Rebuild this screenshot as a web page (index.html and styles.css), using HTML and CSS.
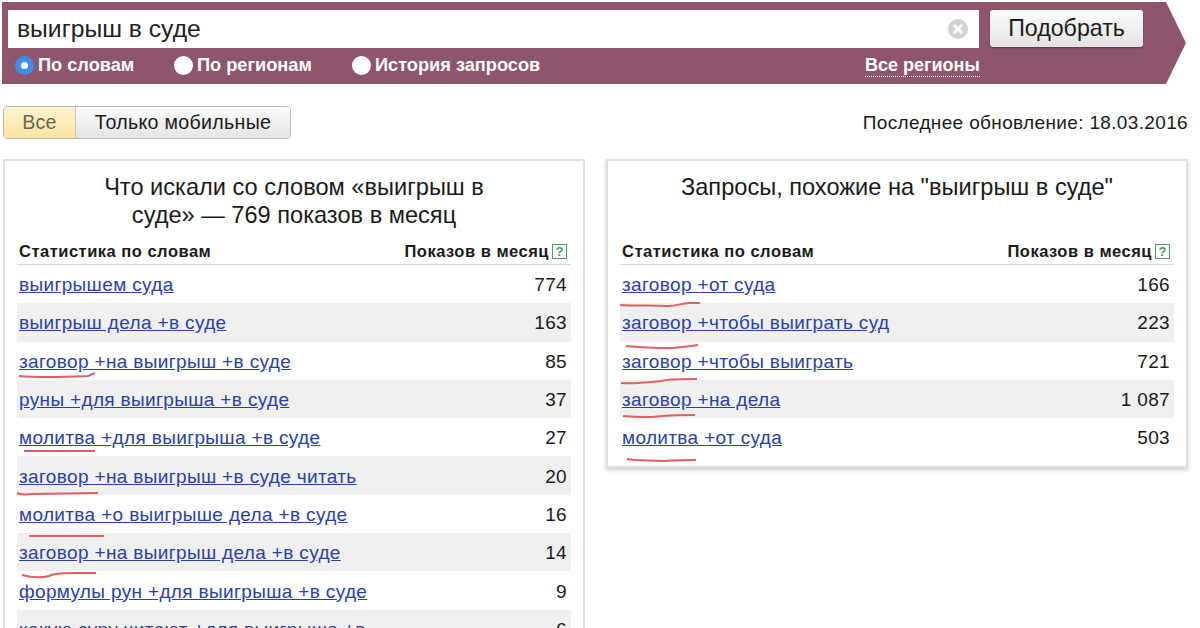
FILE: index.html
```html
<!DOCTYPE html>
<html lang="ru">
<head>
    <meta charset="UTF-8">
    <title>Подбор слов</title>
    <link rel="stylesheet" href="styles.css">
</head>
<body>
    <div class="search-bar">
        <div class="search-top">
            <div class="search-input">
                <span>выигрыш в суде</span>
                <svg class="clear-icon" width="20" height="20" viewBox="0 0 20 20">
                    <circle cx="10" cy="10" r="10" fill="#d2d2d2"/>
                    <path d="M6 6l8 8M14 6l-8 8" stroke="#fff" stroke-width="3"/>
                </svg>
            </div>
            <button class="search-button" type="button">Подобрать</button>
        </div>
        <div class="search-options">
            <div class="option option-first"><i class="radio radio-on"></i>По словам</div>
            <div class="option option-second"><i class="radio"></i>По регионам</div>
            <div class="option option-third"><i class="radio"></i>История запросов</div>
            <a class="regions" href="#">Все регионы</a>
        </div>
    </div>

    <div class="toolbar">
        <div class="tabs">
            <div class="tab tab-active">Все</div>
            <div class="tab">Только мобильные</div>
        </div>
        <div class="updated">Последнее обновление: 18.03.2016</div>
    </div>

    <div class="columns">
        <div class="card card-left">
            <h2>Что искали со словом «выигрыш в<br>суде» — 769 показов в месяц</h2>
            <div class="table-head"><span>Статистика по словам</span><span class="head-right">Показов в месяц<i class="help">?</i></span></div>
            <div class="row"><a href="#">выигрышем суда</a><span>774</span></div>
            <div class="row"><a href="#">выигрыш дела +в суде</a><span>163</span></div>
            <div class="row"><a href="#">заговор +на выигрыш +в суде</a><span>85</span></div>
            <div class="row"><a href="#">руны +для выигрыша +в суде</a><span>37</span></div>
            <div class="row"><a href="#">молитва +для выигрыша +в суде</a><span>27</span></div>
            <div class="row"><a href="#">заговор +на выигрыш +в суде читать</a><span>20</span></div>
            <div class="row"><a href="#">молитва +о выигрыше дела +в суде</a><span>16</span></div>
            <div class="row"><a href="#">заговор +на выигрыш дела +в суде</a><span>14</span></div>
            <div class="row"><a href="#">формулы рун +для выигрыша +в суде</a><span>9</span></div>
            <div class="row"><a href="#">какую суру читают +для выигрыша +в</a><span>6</span></div>
            <!-- red pen marks drawn over the list -->
            <svg class="marks" width="582" height="469" viewBox="0 0 582 469">
                <path d="M16 217C40 219 60 218 85 217L92 214"/>
                <path d="M21 292H92"/>
                <path d="M14 334C20 337 24 335 30 335L95 334"/>
                <path d="M26 377H101"/>
                <path d="M19 416C30 419 38 419 46 417C54 413 70 414 93 414"/>
            </svg>
        </div>
        <div class="card card-right">
            <h2>Запросы, похожие на "выигрыш в суде"</h2>
            <div class="table-head"><span>Статистика по словам</span><span class="head-right">Показов в месяц<i class="help">?</i></span></div>
            <div class="row"><a href="#">заговор +от суда</a><span>166</span></div>
            <div class="row"><a href="#">заговор +чтобы выиграть суд</a><span>223</span></div>
            <div class="row"><a href="#">заговор +чтобы выиграть</a><span>721</span></div>
            <div class="row"><a href="#">заговор +на дела</a><span>1 087</span></div>
            <div class="row"><a href="#">молитва +от суда</a><span>503</span></div>
            <svg class="marks" width="582" height="309" viewBox="0 0 582 309">
                <path d="M14 146C30 147 44 146 60 147C70 148 74 144 84 144H94"/>
                <path d="M20 187C35 188 48 189 60 189C72 189 84 187 92 186"/>
                <path d="M15 224C30 225 45 223 55 222C62 220 75 220 91 220"/>
                <path d="M17 257C28 258 34 258 42 258C50 258 58 256 89 256"/>
                <path d="M21 300C30 302 45 301 58 302C66 301 75 301 90 301"/>
            </svg>
        </div>
    </div>
</body>
</html>
```

FILE: styles.css
```css
html, body {
    margin: 0;
    height: 628px;
    overflow: hidden;
}
body {
    font-family: "Liberation Sans", Arial, sans-serif;
    background-color: #fff;
    color: #1a1a1a;
}

/* top search bar */
.search-bar {
    box-sizing: border-box;
    width: 1184px;
    height: 82px;
    margin: 2px 0 0 2px;
    padding: 8px 0 0 6px;
    background-color: #8e566c;
    clip-path: polygon(0 0, 1164px 0, 1184px 41px, 1164px 82px, 0 82px);
}
.search-top {
    display: flex;
    gap: 11px;
}
.search-input {
    box-sizing: border-box;
    width: 971px;
    height: 38px;
    padding: 0 11px 0 9px;
    display: flex;
    align-items: center;
    justify-content: space-between;
    background-color: #fff;
    font-size: 24.7px;
    color: #222;
}
.search-button {
    width: 153px;
    height: 37px;
    padding: 0;
    border: none;
    border-radius: 3px;
    background: linear-gradient(#fdfdfd, #e2e2e2);
    box-shadow: 0 1px 2px rgba(0, 0, 0, 0.4);
    font-family: inherit;
    font-size: 23.2px;
    color: #1d1d1d;
}
.search-options {
    display: flex;
    align-items: center;
    height: 35px;
    font-size: 18.2px;
    font-weight: bold;
    color: #fff;
}
.option {
    display: flex;
    align-items: center;
    gap: 4px;
}
.option-first {
    padding-left: 7px;
    width: 159px;
}
.option-second {
    width: 178px;
}
.option-third {
    width: 513px;
}
.radio {
    width: 19px;
    height: 19px;
    border-radius: 50%;
    background-color: #fff;
}
.radio-on {
    box-sizing: border-box;
    border: 6px solid #3f8fe8;
}
.regions {
    font-size: 18px;
    color: #fff;
    text-decoration: none;
    border-bottom: 1px dotted #fff;
}

/* tabs and date */
.toolbar {
    display: flex;
    justify-content: space-between;
    align-items: center;
    margin: 22px 12px 0 3px;
}
.tabs {
    display: flex;
    width: 288px;
    height: 33px;
    border: 1px solid #b9b9b9;
    border-radius: 4px;
    box-sizing: border-box;
    overflow: hidden;
    font-size: 19.6px;
}
.tab {
    flex: 1;
    display: flex;
    align-items: center;
    justify-content: center;
    letter-spacing: 0.3px;
    background: linear-gradient(#fdfdfd, #e4e4e4);
}
.tab-active {
    flex: 0 0 71px;
    background: linear-gradient(#fdf3cf, #fbe5a4);
    color: #6a6350;
    border-right: 1px solid #c9c4b2;
}
.updated {
    font-size: 19px;
    letter-spacing: 0.35px;
}

/* result cards */
.columns {
    display: flex;
    gap: 21px;
    margin: 20px 0 0 3px;
}
.card {
    position: relative;
    box-sizing: border-box;
    width: 582px;
    padding: 0 12px;
    border: 2px solid #dfe0e2;
    background-color: #fff;
}
.card-left {
    height: 490px;
}
.card-right {
    height: 309px;
    box-shadow: 0 2px 4px rgba(0, 0, 0, 0.2);
}
.card h2 {
    height: 75px;
    margin: 0;
    padding-top: 12px;
    box-sizing: border-box;
    font-size: 23.6px;
    font-weight: normal;
    line-height: 28px;
    text-align: center;
}
.table-head {
    box-sizing: border-box;
    display: flex;
    justify-content: space-between;
    align-items: center;
    height: 29px;
    padding: 2px 4px 0 2px;
    border-bottom: 1px solid #d5d5d5;
    font-size: 16.5px;
    letter-spacing: 0.5px;
    font-weight: bold;
}
.head-right {
    display: flex;
    align-items: center;
    gap: 3px;
}
.help {
    box-sizing: border-box;
    width: 15px;
    height: 15px;
    border: 1px solid #4d9a5e;
    font-size: 13px;
    font-style: normal;
    letter-spacing: 0;
    line-height: 13px;
    text-align: center;
    color: #4d9a5e;
}
.row {
    box-sizing: border-box;
    display: flex;
    justify-content: space-between;
    align-items: center;
    height: 38.3px;
    padding: 2px 4px 0 2px;
    font-size: 19px;
    letter-spacing: 0.35px;
}
.row:nth-of-type(odd) {
    background-color: #f0f0f1;
}
.row a {
    color: #2a41a5;
}
.marks {
    position: absolute;
    left: -2px;
    top: -2px;
    pointer-events: none;
}
.marks path {
    fill: none;
    stroke: #e0605f;
    stroke-width: 2;
}
```
